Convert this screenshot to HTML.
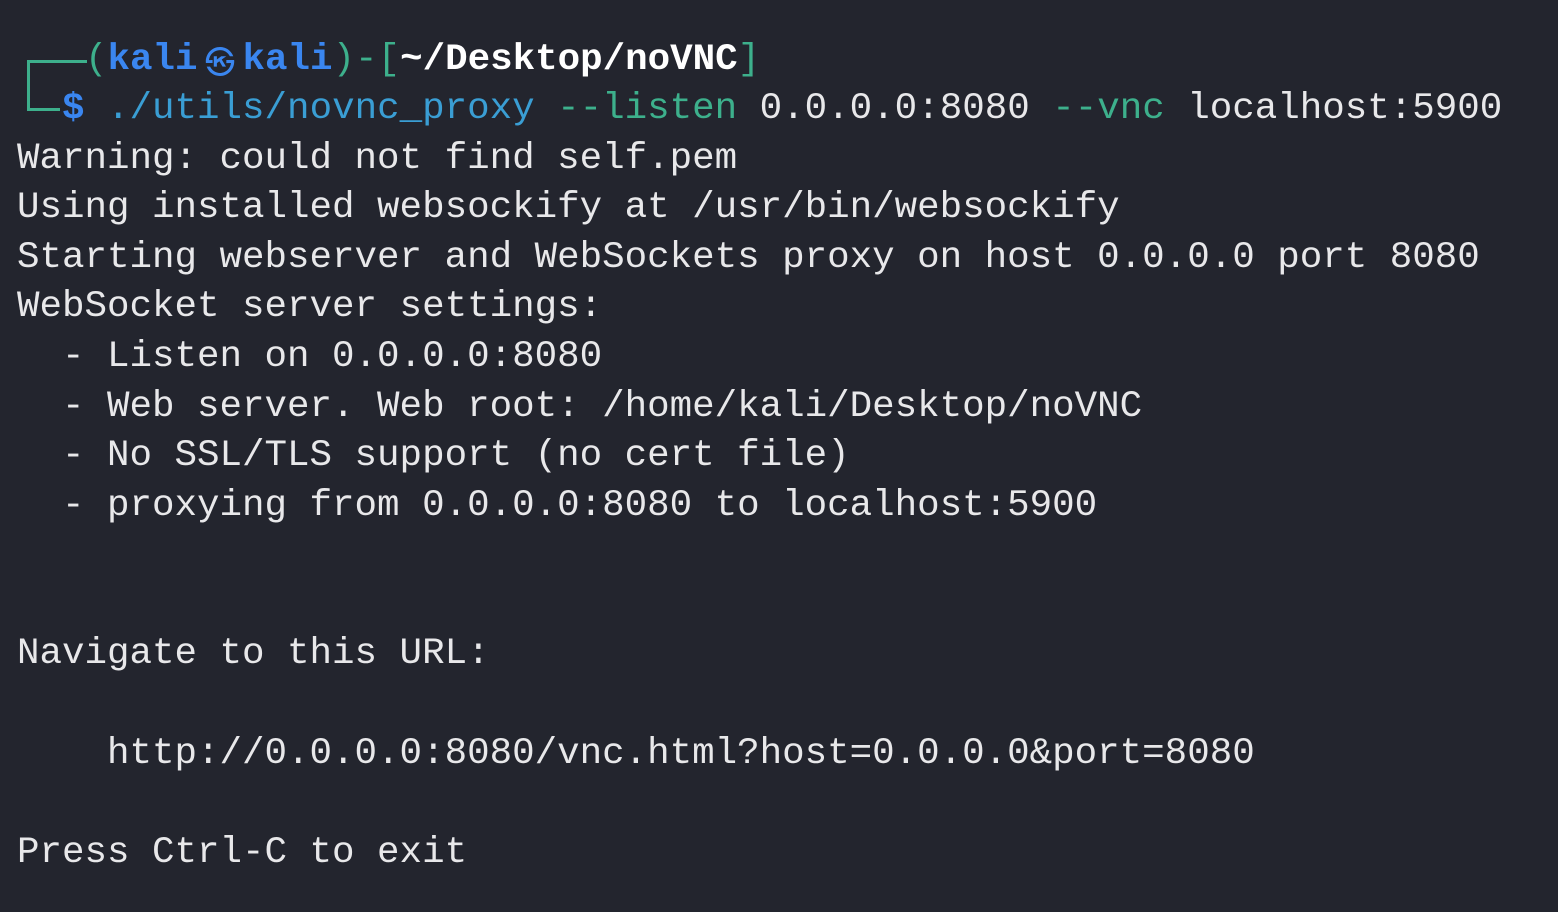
<!DOCTYPE html>
<html><head><meta charset="utf-8"><style>
html,body{margin:0;padding:0;}
body{width:1558px;height:912px;background:#23252e;overflow:hidden;position:relative;font-family:"Liberation Mono","DejaVu Sans Mono",monospace;font-size:37.5px;color:#e8e8ea;}
.l{position:absolute;white-space:pre;line-height:50px;height:50px;}
.g{color:#3db08c}.b{color:#3a86f0;font-weight:bold}.w{color:#fff;font-weight:bold}.c{color:#3a9ed4}
.k{display:inline-block;width:45px;text-align:center;font-family:"Noto Sans CJK JP",sans-serif;font-size:30px;vertical-align:top}
.v{position:absolute;border-left:3px solid #3db08c;border-top:3px solid #3db08c;left:27px;top:60px;width:57px;height:48px}
.h{position:absolute;border-top:3px solid #3db08c;left:27px;top:108px;width:33px}
</style></head><body>
<div class="v"></div><div class="h"></div>
<div class="l" style="left:85px;top:35px"><span class="g">(</span><span class="b">kali<span class="k">㉿</span>kali</span><span class="g">)-[</span><span class="w">~/Desktop/noVNC</span><span class="g">]</span></div>
<div class="l" style="left:62px;top:84px"><span class="b" style="color:#3a86f0">$</span> <span class="c">./utils/novnc_proxy</span> <span class="g">--listen</span> 0.0.0.0:8080 <span class="g">--vnc</span> localhost:5900</div>
<div class="l" style="left:17px;top:134px">Warning: could not find self.pem</div>
<div class="l" style="left:17px;top:183px">Using installed websockify at /usr/bin/websockify</div>
<div class="l" style="left:17px;top:233px">Starting webserver and WebSockets proxy on host 0.0.0.0 port 8080</div>
<div class="l" style="left:17px;top:282px">WebSocket server settings:</div>
<div class="l" style="left:17px;top:332px">  - Listen on 0.0.0.0:8080</div>
<div class="l" style="left:17px;top:382px">  - Web server. Web root: /home/kali/Desktop/noVNC</div>
<div class="l" style="left:17px;top:431px">  - No SSL/TLS support (no cert file)</div>
<div class="l" style="left:17px;top:481px">  - proxying from 0.0.0.0:8080 to localhost:5900</div>
<div class="l" style="left:17px;top:629px">Navigate to this URL:</div>
<div class="l" style="left:17px;top:729px">    http://0.0.0.0:8080/vnc.html?host=0.0.0.0&amp;port=8080</div>
<div class="l" style="left:17px;top:828px">Press Ctrl-C to exit</div>
</body></html>
